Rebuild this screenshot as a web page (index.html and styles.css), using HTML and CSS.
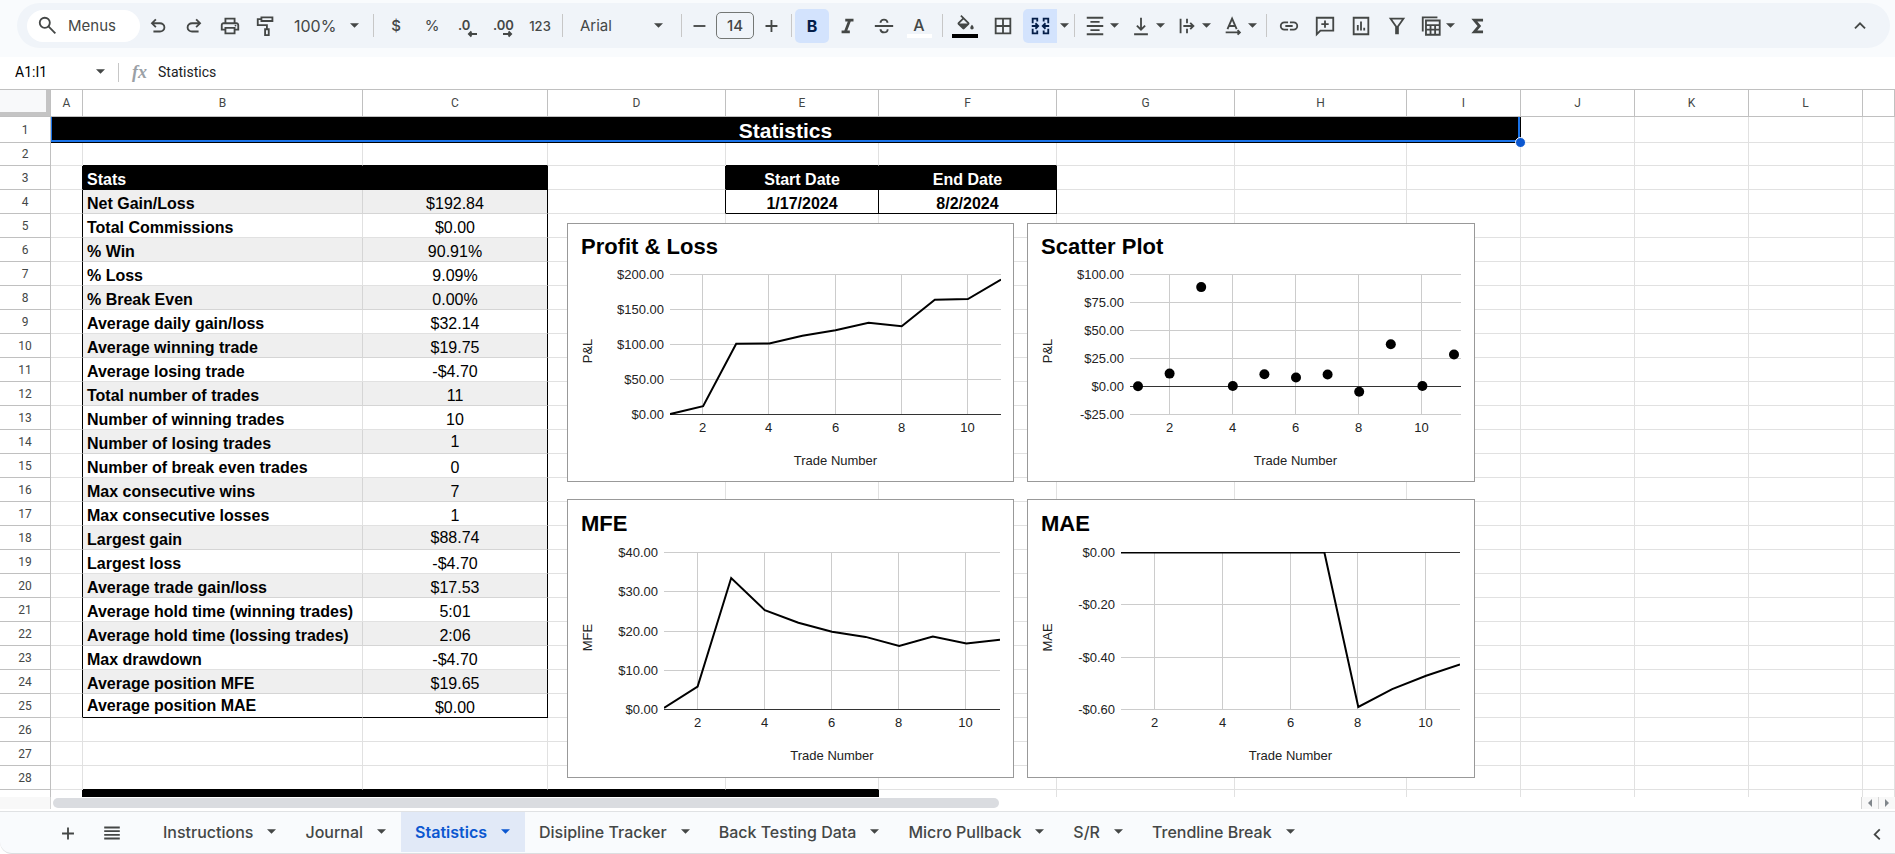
FILE: index.html
```html
<!DOCTYPE html>
<html lang="en">
	<head>
		<meta charset="utf-8">
		<meta name="viewport" content="width=device-width, initial-scale=1">
		<title>Statistics</title>
		<link rel="stylesheet" href="styles.css">
	</head>
	<body>
		<header class="topbar">
			<div class="toolbar" role="toolbar" aria-label="Main toolbar">
				<button class="menus"><svg class="icon" viewBox="0 0 24 24"><circle cx="8.500" cy="8.500" r="5.500"/><path d="M12.500 12.500L20 20"/></svg>Menus</button>
				<button class="tool" aria-label="Undo"><svg class="icon solid" viewBox="0 0 24 24"><path d="M7 19v-2h7.1q1.575 0 2.738-1Q18 15 18 13.5T16.838 11Q15.675 10 14.1 10H7.8l2.6 2.6L9 14 4 9l5-5 1.4 1.4L7.8 8h6.3q2.425 0 4.163 1.575Q20 11.15 20 13.5q0 2.35-1.737 3.925Q16.525 19 14.1 19z"/></svg></button>
				<button class="tool" aria-label="Redo"><svg class="icon solid" viewBox="0 0 24 24"><path transform="matrix(-1 0 0 1 24 0)" d="M7 19v-2h7.1q1.575 0 2.738-1Q18 15 18 13.5T16.838 11Q15.675 10 14.1 10H7.8l2.6 2.6L9 14 4 9l5-5 1.4 1.4L7.8 8h6.3q2.425 0 4.163 1.575Q20 11.15 20 13.5q0 2.35-1.737 3.925Q16.525 19 14.1 19z"/></svg></button>
				<button class="tool" aria-label="Print"><svg class="icon solid" viewBox="0 0 24 24"><path d="M19 8h-1V3H6v5H5c-1.66 0-3 1.34-3 3v6h4v4h12v-4h4v-6c0-1.66-1.34-3-3-3zM8 5h8v3H8V5zm8 12v2H8v-4h8v2zm2-2v-2H6v2H4v-4c0-.55.45-1 1-1h14c.55 0 1 .45 1 1v4h-2z"/><circle cx="18" cy="11.5" r="1"/></svg></button>
				<button class="tool" aria-label="Paint format"><svg class="icon" viewBox="0 0 24 24"><path d="M7 2.500h12v4H7zM7 4.500H3V11h10v4M11 15.500h4V22h-4z"/></svg></button>
				<select class="zoom" aria-label="Zoom"><option>100%</option></select>
				<span class="sep"></span>
				<button class="tool" aria-label="Format as currency">$</button>
				<button class="tool light" aria-label="Format as percent">%</button>
				<button class="tool" aria-label="Decrease decimal places"><svg class="glyph" viewBox="0 0 26 26"><text x="3" y="17">.0</text><path d="M22 21h-8M16.500 18.500L14 21l2.500 2.500"/></svg></button>
				<button class="tool" aria-label="Increase decimal places"><svg class="glyph" viewBox="0 0 26 26"><text x="2" y="17">.00</text><path d="M12 21h8M17.500 18.500L20 21l-2.500 2.500"/></svg></button>
				<button class="tool small" aria-label="More formats">123</button>
				<span class="sep"></span>
				<select class="font" aria-label="Font"><option>Arial</option></select>
				<span class="sep flush"></span>
				<button class="tool narrow" aria-label="Decrease font size"><svg class="icon" viewBox="0 0 24 24"><path d="M6 12h13"/></svg></button>
				<input class="size" type="text" value="14" aria-label="Font size">
				<button class="tool narrow" aria-label="Increase font size"><svg class="icon" viewBox="0 0 24 24"><path d="M6 12h13M12.500 5.500v13"/></svg></button>
				<span class="sep tight"></span>
				<button class="tool active bold" aria-label="Bold" aria-pressed="true">B</button>
				<button class="tool" aria-label="Italic"><svg class="icon heavy" viewBox="0 0 24 24"><path d="M9 5.500h9M5 18.500h9M14 5.500l-5 13"/></svg></button>
				<button class="tool" aria-label="Strikethrough"><svg class="icon" viewBox="0 0 24 24"><path d="M2 12h20M16 8.500C15.500 6 14 5 12 5S8.500 6 8 8.500M8 15.500c.5 2.500 2 3.500 4 3.500s4-1 4-3.500"/></svg></button>
				<button class="tool" aria-label="Text color"><svg class="glyph" viewBox="0 0 26 26"><text x="12" y="18" text-anchor="middle" class="letter">A</text><rect x="0" y="21" width="25" height="4" fill="#fff"/></svg></button>
				<span class="sep"></span>
				<button class="tool fill-color" aria-label="Fill color"><svg class="glyph" viewBox="0 0 26 26"><path class="fill" transform="translate(3 2) scale(.85)" d="M16.560 8.940L7.620 0 6.210 1.410l2.380 2.380-5.150 5.150c-.59.59-.59 1.540 0 2.120l5.500 5.500c.29.29.68.44 1.060.44s.77-.15 1.060-.44l5.500-5.500c.59-.58.59-1.530 0-2.120zM5.210 10L10 5.210 14.790 10H5.210zM20 11.500s-2 2.170-2 3.500c0 1.100.9 2 2 2s2-.9 2-2c0-1.330-2-3.500-2-3.500z"/><rect x="0" y="21" width="26" height="4" fill="#000"/></svg></button>
				<button class="tool" aria-label="Borders"><svg class="icon" viewBox="0 0 24 24"><path d="M4 4h16v16H4zM12 4v16M4 12h16"/></svg></button>
				<button class="tool active merge" aria-label="Merge cells" aria-pressed="true"><svg class="icon" viewBox="0 0 24 24"><path d="M4 9V4h5v3M16 7V4h5v5M4 15v5h5v-3M16 17v3h5v-5M3 12h6M22 12h-6M7 9l3 3-3 3M18 9l-3 3 3 3"/></svg></button>
				<button class="caret-button" aria-label="Select merge type"><svg class="caret" viewBox="0 0 10 6"><path d="M0 0h10L5 5z"/></svg></button>
				<span class="sep tight"></span>
				<button class="tool drop" aria-label="Horizontal align"><svg class="icon" viewBox="0 0 24 24"><path d="M3 3h18M7 7.500h10M3 12h18M7 16.500h10M3 21h18"/></svg><svg class="caret" viewBox="0 0 10 6"><path d="M0 0h10L5 5z"/></svg></button>
				<button class="tool drop" aria-label="Vertical align"><svg class="icon" viewBox="0 0 24 24"><path d="M12 3v13M7.500 11.500L12 16l4.500-4.500M4.500 21h15"/></svg><svg class="caret" viewBox="0 0 10 6"><path d="M0 0h10L5 5z"/></svg></button>
				<button class="tool drop" aria-label="Text wrapping"><svg class="icon" viewBox="0 0 24 24"><path d="M5 4v16M12 4v5M12 15v5M8 12h11M15.500 8.500L19 12l-3.500 3.500"/></svg><svg class="caret" viewBox="0 0 10 6"><path d="M0 0h10L5 5z"/></svg></button>
				<button class="tool drop" aria-label="Text rotation"><svg class="icon" viewBox="0 0 24 24"><path d="M6 15.500L11 4l5 11.500M7.500 12h7M4 19h15.500M17 16.500l2.500 2.500-2.500 2.500"/></svg><svg class="caret" viewBox="0 0 10 6"><path d="M0 0h10L5 5z"/></svg></button>
				<span class="sep"></span>
				<button class="tool" aria-label="Insert link"><svg class="icon" viewBox="0 0 24 24"><path d="M11 8H7a4 4 0 0 0 0 8h4M13 8h4a4 4 0 0 1 0 8h-4M8 12h8"/></svg></button>
				<button class="tool" aria-label="Insert comment"><svg class="icon" viewBox="0 0 24 24"><path d="M3 21V3h18v14H7zM12 6v8M8 10h8"/></svg></button>
				<button class="tool" aria-label="Insert chart"><svg class="icon" viewBox="0 0 24 24"><path d="M4 3h16v18H4zM8.500 17v-6M12 17V7M15.500 17v-3"/></svg></button>
				<button class="tool" aria-label="Create a filter"><svg class="icon" viewBox="0 0 24 24"><path d="M5 4h14L13 12.500V20h-2v-7.500z"/></svg></button>
				<button class="tool drop views" aria-label="Table views"><svg class="icon" viewBox="0 0 24 24"><path d="M3 18V2.500h16M6.500 6h15v15.500h-15zM6.500 11h15M6.500 16h15M11.500 11v10.500M16.500 11v10.500"/></svg><svg class="caret" viewBox="0 0 10 6"><path d="M0 0h10L5 5z"/></svg></button>
				<button class="tool" aria-label="Functions"><svg class="icon heavy" viewBox="0 0 24 24"><path d="M17.500 5.500H8l5.500 6.500L8 18.500h9.500"/></svg></button>
				<button class="tool collapse" aria-label="Hide the menus"><svg class="icon" viewBox="0 0 24 24"><path d="M6.500 14.500L12 9l5.500 5.500"/></svg></button>
			</div>
		</header>
		<div class="formula-bar">
			<input class="name-box" type="text" value="A1:I1" aria-label="Name box">
			<button class="caret-button" aria-label="Named ranges"><svg class="caret" viewBox="0 0 10 6"><path d="M0 0h10L5 5z"/></svg></button>
			<span class="bar"></span>
			<span class="fx">fx</span>
			<input class="formula" type="text" value="Statistics" aria-label="Formula">
		</div>

		<main class="grid">
			<table class="sheet">
				<colgroup>
					<col class="w-head"><col class="w-a"><col class="w-b"><col class="w-c"><col class="w-d"><col class="w-e"><col class="w-d"><col class="w-d"><col class="w-h"><col class="w-i"><col class="w-i"><col class="w-i"><col class="w-i"><col>
				</colgroup>
				<thead>
					<tr><td class="corner"></td><th>A</th><th>B</th><th>C</th><th>D</th><th>E</th><th>F</th><th>G</th><th>H</th><th>I</th><th>J</th><th>K</th><th>L</th><th></th></tr>
				</thead>
				<tbody id="rows"></tbody>
			</table>
			<div class="charts" id="charts"></div>
		</main>

		<div class="hscroll">
			<span class="gutter"></span>
			<span class="track"><span class="thumb"></span></span>
			<button class="step" aria-label="Scroll left"><svg viewBox="0 0 6 8"><path d="M5 0v8L1 4z"/></svg></button>
			<button class="step" aria-label="Scroll right"><svg viewBox="0 0 6 8"><path d="M1 0v8l4-4z"/></svg></button>
		</div>

		<nav class="tabs" aria-label="Sheets">
			<button class="sheet-tool" aria-label="Add sheet"><svg class="icon" viewBox="0 0 24 24"><path d="M12 6v13M5.500 12.500h13"/></svg></button>
			<button class="sheet-tool" aria-label="All sheets"><svg class="icon" viewBox="0 0 24 24"><path d="M3.500 6h17M3.500 10h17M3.500 14h17M3.500 18h17"/></svg></button>
			<div class="tab-list">
				<button class="tab">Instructions<svg class="caret" viewBox="0 0 10 6"><path d="M0 0h10L5 5z"/></svg></button>
				<button class="tab">Journal<svg class="caret" viewBox="0 0 10 6"><path d="M0 0h10L5 5z"/></svg></button>
				<button class="tab current">Statistics<svg class="caret" viewBox="0 0 10 6"><path d="M0 0h10L5 5z"/></svg></button>
				<button class="tab">Disipline Tracker<svg class="caret" viewBox="0 0 10 6"><path d="M0 0h10L5 5z"/></svg></button>
				<button class="tab">Back Testing Data<svg class="caret" viewBox="0 0 10 6"><path d="M0 0h10L5 5z"/></svg></button>
				<button class="tab">Micro Pullback<svg class="caret" viewBox="0 0 10 6"><path d="M0 0h10L5 5z"/></svg></button>
				<button class="tab">S/R<svg class="caret" viewBox="0 0 10 6"><path d="M0 0h10L5 5z"/></svg></button>
				<button class="tab">Trendline Break<svg class="caret" viewBox="0 0 10 6"><path d="M0 0h10L5 5z"/></svg></button>
			</div>
			<button class="sheet-tool" aria-label="Show side panel"><svg class="icon" viewBox="0 0 24 24"><path d="M15 8l-5.500 5.500L15 19"/></svg></button>
		</nav>
		<script src="sheet.js"></script>
	</body>
</html>
```
FILE: styles.css
```css
* {
	box-sizing: border-box;
}
html, body {
	height: 100%;
	margin: 0;
}
body {
	display: flex;
	flex-direction: column;
	overflow: hidden;
	background: #fff;
	color: #444746;
	font-family: Inter, "Liberation Sans", sans-serif;
	font-size: 15px;
}
button, input, select {
	font: inherit;
	color: inherit;
	border: 0;
	padding: 0;
	margin: 0;
	background: none;
	border-radius: 0;
}
button {
	display: flex;
	align-items: center;
	justify-content: center;
}

/* icons */
.icon {
	width: 22px;
	height: 22px;
	flex: none;
	fill: none;
	stroke: currentColor;
	stroke-width: 2;
}
.icon.solid {
	fill: currentColor;
	stroke: none;
}
.icon.heavy {
	stroke-width: 3;
}
.glyph {
	width: 26px;
	height: 26px;
	fill: currentColor;
	font-size: 13px;
	font-weight: 600;
}
.glyph .letter {
	font-size: 16px;
	font-weight: 500;
}
.glyph path {
	fill: none;
	stroke: currentColor;
	stroke-width: 2;
}
.glyph path.fill {
	fill: currentColor;
	stroke: none;
}
.caret {
	width: 9px;
	height: 6px;
	flex: none;
	fill: currentColor;
}

/* toolbar */
.topbar {
	flex: none;
	height: 57px;
	padding: 3px 5px 9px 17px;
	background: #f9fbfd;
}
.toolbar {
	display: flex;
	align-items: center;
	height: 45px;
	padding: 0 12px 0 10px;
	border-radius: 23px;
	background: #f0f4f9;
}
.menus {
	justify-content: flex-start;
	width: 113px;
	height: 32px;
	padding-left: 10px;
	gap: 9px;
	border-radius: 16px;
	background: #fff;
}
.tool {
	flex: none;
	width: 36px;
	height: 34px;
	border-radius: 5px;
	font-weight: 500;
}
.tool.small {
	font-size: 13px;
}
.tool.light {
	font-weight: 400;
}
.tool.narrow {
	width: 34px;
}
.tool.bold {
	margin-right: 1px;
	font-size: 16px;
	font-weight: 700;
}
.tool.fill-color {
	margin-right: 2px;
}
.tool.active {
	width: 34px;
	background: #d3e3fd;
	color: #041e49;
}
.tool.merge {
	margin-left: 2px;
	border-radius: 5px 0 0 5px;
}
.tool.drop {
	width: 46px;
	gap: 4px;
}
.tool.views {
	width: 45px;
}
.caret-button {
	flex: none;
	width: 14px;
	height: 30px;
}
.collapse {
	margin-left: auto;
}
.sep {
	flex: none;
	width: 1px;
	height: 23px;
	margin: 0 4px;
	background: #c7c7c7;
}
.sep.tight {
	margin: 0 3px;
}
.sep.flush {
	margin: 0;
}
.zoom, .font {
	appearance: none;
	height: 30px;
	background: url("data:image/svg+xml,%3Csvg xmlns='http://www.w3.org/2000/svg' viewBox='0 0 10 6'%3E%3Cpath d='M0 0h10L5 5z' fill='%23444746'/%3E%3C/svg%3E") no-repeat right 10px center / 9px 6px;
}
.zoom {
	width: 85px;
	padding-left: 10px;
	font-size: 16px;
}
.font {
	width: 114px;
	padding-left: 13px;
	background-position: right 18px center;
}
.size {
	width: 38px;
	height: 27px;
	border: 1px solid #747775;
	border-radius: 5px;
	text-align: center;
	font-weight: 500;
}

/* formula bar */
.formula-bar {
	display: flex;
	flex: none;
	align-items: center;
	height: 32px;
	padding-bottom: 2px;
	font-family: Roboto, sans-serif;
}
.name-box {
	width: 93px;
	padding-left: 15px;
	font-size: 14px;
	color: #000;
}
.formula-bar .bar {
	width: 1px;
	height: 19px;
	margin: 0 13px 0 11px;
	background: #c7c7c7;
}
.fx {
	width: 26px;
	font: italic bold 18px "Liberation Serif", serif;
	color: #9aa0a6;
}
.formula {
	flex: 1;
	font-size: 14px;
	color: #202124;
}

/* grid */
.grid {
	position: relative;
	flex: 1;
	min-height: 0;
	overflow: hidden;
	border-top: 1px solid #c0c0c0;
}
.sheet {
	width: 100%;
	table-layout: fixed;
	border-collapse: separate;
	border-spacing: 0;
	font: 16px/18px "Liberation Sans", Arial, sans-serif;
	color: #000;
}
.w-head { width: 51px; }
.w-a { width: 32px; }
.w-b { width: 280px; }
.w-c { width: 185px; }
.w-d { width: 178px; }
.w-e { width: 153px; }
.w-h { width: 172px; }
.w-i { width: 114px; }
.sheet th, .sheet td {
	padding: 0;
	border-right: 1px solid #e1e1e1;
	border-bottom: 1px solid #e1e1e1;
}
.sheet tr {
	height: 24px;
}
.sheet thead tr {
	height: 27px;
}
.sheet th, .sheet .corner {
	border-color: #c0c0c0;
	font: 12px/14px Roboto, sans-serif;
	color: #444746;
}
.sheet .corner {
	background: #f8f9fa;
	box-shadow: inset -4px -4px #c4c4c4;
}
.sheet tbody td {
	vertical-align: bottom;
	white-space: nowrap;
}
.sheet .title-row { height: 26px; }
.sheet .gap-row { height: 23px; }
.sheet .label {
	padding-left: 4px;
	font-weight: bold;
}
.sheet .value {
	text-align: center;
}
.sheet .date {
	text-align: center;
	font-weight: bold;
}
.sheet .head {
	background: #000;
	color: #fff;
	border-color: #000;
}
.sheet .shade {
	background: #efefef;
	border-color: #d5d5d5;
}
.sheet .edge-right { border-right-color: #000; }
.sheet .edge-bottom { border-bottom-color: #000; }
.sheet td.middle { vertical-align: middle; }
.sheet td.title {
	position: relative;
	padding-bottom: 2px;
	background: #000;
	color: #fff;
	border-color: #000;
	text-align: center;
	font-size: 21px;
	font-weight: bold;
	box-shadow: inset 1px 0 #1a73e8, inset -2px -2px #1a73e8;
}
.handle {
	position: absolute;
	right: -6px;
	bottom: -6px;
	width: 11px;
	height: 11px;
	border: 1px solid #fff;
	border-radius: 50%;
	background: #0b57d0;
}

/* charts float over the cells */
.charts {
	position: absolute;
	left: 567px;
	top: 133px;
	display: grid;
	grid-template: 259px 279px / 447px 448px;
	gap: 17px 13px;
}
.chart {
	border: 1px solid #999;
	background: #fff;
	overflow: hidden;
}
.chart svg {
	display: block;
	width: 100%;
	height: 100%;
	font: 13px "Liberation Sans", Arial, sans-serif;
	fill: #222;
}
.chart .chart-title {
	font-size: 22px;
	font-weight: bold;
	fill: #000;
}
.chart .rule { stroke: #ccc; }
.chart .axis { stroke: #333; }
.chart .series {
	fill: none;
	stroke: #000;
	stroke-width: 2;
}

/* horizontal scrollbar */
.hscroll {
	display: flex;
	flex: none;
	height: 14px;
}
.gutter {
	width: 51px;
	height: 12px;
	border-right: 1px solid #d5d5d5;
	background: #f8f8f8;
}
.track {
	flex: 1;
	padding: 1px 2px;
}
.thumb {
	display: block;
	width: 946px;
	height: 10px;
	border-radius: 5px;
	background: #dadce0;
}
.step {
	width: 17px;
	height: 12px;
	border-left: 1px solid #d5d5d5;
	background: #f8f8f8;
}
.step svg {
	width: 6px;
	height: 8px;
	fill: #80868b;
}

/* sheet tabs */
.tabs {
	display: flex;
	flex: none;
	align-items: stretch;
	height: 43px;
	padding-left: 46px;
	border-top: 1px solid #e0e2e4;
	border-bottom: 1px solid #dcdee0;
	border-bottom-left-radius: 12px;
	background: #f9fbfd;
}
.sheet-tool {
	width: 44px;
}
.sheet-tool:last-child {
	width: 36px;
}
.tab-list {
	display: flex;
	flex: 1;
	padding-left: 15px;
}
.tab {
	height: 40px;
	gap: 14px;
	padding: 0 15px 0 14px;
	font-size: 16px;
	font-weight: 500;
}
.tab.current {
	background: #e1e9f7;
	color: #0b57d0;
	font-weight: 600;
}
```
FILE: sheet.js
```js
// label, value, extra class on the label, extra class on the value
var stats = [
	['Net Gain/Loss', '$192.84'],
	['Total Commissions', '$0.00'],
	['% Win', '90.91%'],
	['% Loss', '9.09%'],
	['% Break Even', '0.00%'],
	['Average daily gain/loss', '$32.14'],
	['Average winning trade', '$19.75'],
	['Average losing trade', '-$4.70'],
	['Total number of trades', '11'],
	['Number of winning trades', '10'],
	['Number of losing trades', '1', '', 'middle'],
	['Number of break even trades', '0'],
	['Max consecutive wins', '7'],
	['Max consecutive losses', '1'],
	['Largest gain', '$88.74', '', 'middle'],
	['Largest loss', '-$4.70'],
	['Average trade gain/loss', '$17.53'],
	['Average hold time (winning trades)', '5:01'],
	['Average hold time (lossing trades)', '2:06'],
	['Max drawdown', '-$4.70'],
	['Average position MFE', '$19.65'],
	['Average position MAE', '$0.00', 'middle', '']
];

function cell(cls, text) {
	return '<td class="' + (cls || '') + '">' + (text || '') + '</td>';
}
function blanks(n) {
	return new Array(n + 1).join(cell());
}

var html = '';
for (var r = 1; r <= 29; r++) {
	// row 29 only peeks out above the scrollbar, so it has no number
	var head = '<th>' + (r < 29 ? r : '') + '</th>';
	if (r == 1) {
		html += '<tr class="title-row">' + head + '<td class="title" colspan="9">Statistics<span class="handle"></span></td>' + blanks(4) + '</tr>';
	} else if (r == 2) {
		html += '<tr class="gap-row">' + head + cell() + cell('edge-bottom') + cell('edge-bottom') + cell() + cell('edge-bottom') + cell('edge-bottom') + blanks(7) + '</tr>';
	} else if (r == 3) {
		html += '<tr>' + head + cell('edge-right') + cell('head label', 'Stats') + cell('head') + cell('edge-right') + cell('head date', 'Start Date') + cell('head date', 'End Date') + blanks(7) + '</tr>';
	} else if (r <= 25) {
		var s = stats[r - 4];
		var extra = (r % 2 == 0 ? ' shade' : '') + (r == 25 ? ' edge-bottom' : '');
		html += '<tr>' + head + cell('edge-right') + cell('label ' + (s[2] || '') + extra, s[0]) + cell('value edge-right ' + (s[3] || '') + extra, s[1]);
		if (r == 4) {
			html += cell('edge-right') + cell('date edge-right edge-bottom', '1/17/2024') + cell('date edge-right edge-bottom', '8/2/2024') + blanks(7);
		} else {
			html += blanks(10);
		}
		html += '</tr>';
	} else if (r == 28) {
		html += '<tr>' + head + cell() + cell('edge-bottom') + cell('edge-bottom') + cell('edge-bottom') + cell('edge-bottom') + blanks(8) + '</tr>';
	} else if (r == 29) {
		html += '<tr>' + head + cell('edge-right') + cell('head') + cell('head') + cell('head') + cell('head') + blanks(8) + '</tr>';
	} else {
		html += '<tr>' + head + blanks(13) + '</tr>';
	}
}
document.getElementById('rows').innerHTML = html;

// plot area is left/right/top/bottom, first is the x of trade 1
var charts = [
	{ title: 'Profit & Loss', yTitle: 'P&L', w: 445, h: 257, left: 102, right: 433, top: 50, bottom: 190, first: 102, step: 33.1,
		titleY: 30, min: 0, max: 200, ticks: ['$0.00', '$50.00', '$100.00', '$150.00', '$200.00'],
		data: [0.5, 12, 101, 101.5, 112.5, 120.5, 131, 126, 164, 165, 192.84] },
	{ title: 'Scatter Plot', yTitle: 'P&L', w: 446, h: 257, left: 102, right: 433, top: 50, bottom: 190, first: 110, step: 31.6, dots: true,
		titleY: 30, min: -25, max: 100, ticks: ['-$25.00', '$0.00', '$25.00', '$50.00', '$75.00', '$100.00'],
		data: [0.2, 11.5, 88.74, 0.5, 11, 8, 10.7, -4.7, 37.8, 0.5, 28.5] },
	{ title: 'MFE', yTitle: 'MFE', w: 445, h: 277, left: 96, right: 432, top: 52, bottom: 209, first: 96, step: 33.6,
		titleY: 31, min: 0, max: 40, ticks: ['$0.00', '$10.00', '$20.00', '$30.00', '$40.00'],
		data: [0.4, 5.85, 33.5, 25.3, 22.1, 19.8, 18.5, 16.2, 18.6, 16.8, 17.8] },
	{ title: 'MAE', yTitle: 'MAE', w: 446, h: 277, left: 93, right: 432, top: 52, bottom: 209, first: 93, step: 33.9,
		titleY: 31, min: -0.6, max: 0, ticks: ['-$0.60', '-$0.40', '-$0.20', '$0.00'],
		data: [0, 0, 0, 0, 0, 0, 0, -0.59, -0.522, -0.471, -0.428] }
];

function esc(t) {
	return t.replace('&', '&amp;');
}

function drawChart(c, n) {
	function px(i) { return c.first + (i - 1) * c.step; }
	function py(v) { return c.bottom + 0.5 - (v - c.min) / (c.max - c.min) * (c.bottom - c.top); }
	var zero = Math.floor(py(0)) + 0.5;
	var mid = (c.left + c.right) / 2;
	var out = '<text class="chart-title" x="13" y="' + c.titleY + '">' + esc(c.title) + '</text>';
	for (var x = 2; x <= 10; x += 2) {
		var gx = Math.round(px(x)) - 0.5;
		out += '<path class="rule" d="M' + gx + ' ' + c.top + 'V' + c.bottom + '"/>';
		out += '<text x="' + gx + '" y="' + (c.bottom + 18) + '" text-anchor="middle">' + x + '</text>';
	}
	c.ticks.forEach(function(t, i) {
		var gy = Math.round(c.bottom - i * (c.bottom - c.top) / (c.ticks.length - 1)) + 0.5;
		out += '<path class="rule" d="M' + c.left + ' ' + gy + 'H' + c.right + '"/>';
		out += '<text x="' + (c.left - 6) + '" y="' + (gy + 4) + '" text-anchor="end">' + t + '</text>';
	});
	out += '<path class="axis" d="M' + c.left + ' ' + zero + 'H' + c.right + '"/>';
	if (c.dots) {
		c.data.forEach(function(v, i) {
			out += '<circle cx="' + px(i + 1) + '" cy="' + py(v) + '" r="5" fill="#000"/>';
		});
	} else {
		// lines stay inside the plot area
		out += '<clipPath id="plot' + n + '"><rect x="' + c.left + '" y="' + c.top + '" width="' + (c.right - c.left) + '" height="' + (c.bottom - c.top + 1) + '"/></clipPath>';
		out += '<polyline class="series" clip-path="url(#plot' + n + ')" points="' + c.data.map(function(v, i) {
			return px(i + 1) + ',' + py(v);
		}).join(' ') + '"/>';
	}
	out += '<text x="' + mid + '" y="' + (c.bottom + 51) + '" text-anchor="middle">Trade Number</text>';
	var ty = (c.top + c.bottom) / 2 + 7;
	out += '<text transform="translate(24 ' + ty + ') rotate(-90)" text-anchor="middle">' + esc(c.yTitle) + '</text>';
	return '<div class="chart"><svg viewBox="0 0 ' + c.w + ' ' + c.h + '">' + out + '</svg></div>';
}
document.getElementById('charts').innerHTML = charts.map(drawChart).join('');
```
